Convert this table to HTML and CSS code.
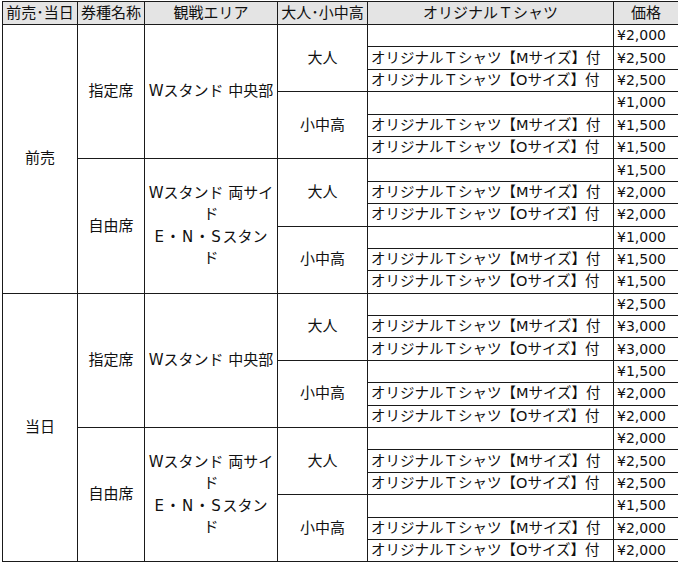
FILE: index.html
```html
<!DOCTYPE html>
<html lang="ja">
<head>
<meta charset="utf-8">
<title>チケット料金表</title>
<link rel="stylesheet" href="styles.css">
</head>
<body>
<table class="price-table">
  <colgroup>
    <col class="c-sale">
    <col class="c-type">
    <col class="c-area">
    <col class="c-age">
    <col class="c-shirt">
    <col class="c-price">
  </colgroup>
  <thead>
    <tr>
      <th>前売･当日</th>
      <th>券種名称</th>
      <th>観戦エリア</th>
      <th>大人･小中高</th>
      <th>オリジナルＴシャツ</th>
      <th>価格</th>
    </tr>
  </thead>
  <tbody>
    <tr>
      <td class="center" rowspan="12">前売</td>
      <td class="center" rowspan="6">指定席</td>
      <td class="center" rowspan="6">Wスタンド 中央部</td>
      <td class="center" rowspan="3">大人</td>
      <td class="shirt"></td>
      <td class="price">¥2,000</td>
    </tr>
    <tr><td class="shirt">オリジナルＴシャツ【Mサイズ】付</td><td class="price">¥2,500</td></tr>
    <tr><td class="shirt">オリジナルＴシャツ【Oサイズ】付</td><td class="price">¥2,500</td></tr>
    <tr>
      <td class="center" rowspan="3">小中高</td>
      <td class="shirt"></td>
      <td class="price">¥1,000</td>
    </tr>
    <tr><td class="shirt">オリジナルＴシャツ【Mサイズ】付</td><td class="price">¥1,500</td></tr>
    <tr><td class="shirt">オリジナルＴシャツ【Oサイズ】付</td><td class="price">¥1,500</td></tr>
    <tr>
      <td class="center" rowspan="6">自由席</td>
      <td class="center multi" rowspan="6">Wスタンド 両サイ<br>ド<br><span class="ens">E<span class="cjk">・</span>N<span class="cjk">・</span>S</span>スタン<br>ド</td>
      <td class="center" rowspan="3">大人</td>
      <td class="shirt"></td>
      <td class="price">¥1,500</td>
    </tr>
    <tr><td class="shirt">オリジナルＴシャツ【Mサイズ】付</td><td class="price">¥2,000</td></tr>
    <tr><td class="shirt">オリジナルＴシャツ【Oサイズ】付</td><td class="price">¥2,000</td></tr>
    <tr>
      <td class="center" rowspan="3">小中高</td>
      <td class="shirt"></td>
      <td class="price">¥1,000</td>
    </tr>
    <tr><td class="shirt">オリジナルＴシャツ【Mサイズ】付</td><td class="price">¥1,500</td></tr>
    <tr><td class="shirt">オリジナルＴシャツ【Oサイズ】付</td><td class="price">¥1,500</td></tr>

    <tr>
      <td class="center" rowspan="12">当日</td>
      <td class="center" rowspan="6">指定席</td>
      <td class="center" rowspan="6">Wスタンド 中央部</td>
      <td class="center" rowspan="3">大人</td>
      <td class="shirt"></td>
      <td class="price">¥2,500</td>
    </tr>
    <tr><td class="shirt">オリジナルＴシャツ【Mサイズ】付</td><td class="price">¥3,000</td></tr>
    <tr><td class="shirt">オリジナルＴシャツ【Oサイズ】付</td><td class="price">¥3,000</td></tr>
    <tr>
      <td class="center" rowspan="3">小中高</td>
      <td class="shirt"></td>
      <td class="price">¥1,500</td>
    </tr>
    <tr><td class="shirt">オリジナルＴシャツ【Mサイズ】付</td><td class="price">¥2,000</td></tr>
    <tr><td class="shirt">オリジナルＴシャツ【Oサイズ】付</td><td class="price">¥2,000</td></tr>
    <tr>
      <td class="center" rowspan="6">自由席</td>
      <td class="center multi" rowspan="6">Wスタンド 両サイ<br>ド<br><span class="ens">E<span class="cjk">・</span>N<span class="cjk">・</span>S</span>スタン<br>ド</td>
      <td class="center" rowspan="3">大人</td>
      <td class="shirt"></td>
      <td class="price">¥2,000</td>
    </tr>
    <tr><td class="shirt">オリジナルＴシャツ【Mサイズ】付</td><td class="price">¥2,500</td></tr>
    <tr><td class="shirt">オリジナルＴシャツ【Oサイズ】付</td><td class="price">¥2,500</td></tr>
    <tr>
      <td class="center" rowspan="3">小中高</td>
      <td class="shirt"></td>
      <td class="price">¥1,500</td>
    </tr>
    <tr><td class="shirt">オリジナルＴシャツ【Mサイズ】付</td><td class="price">¥2,000</td></tr>
    <tr><td class="shirt">オリジナルＴシャツ【Oサイズ】付</td><td class="price">¥2,000</td></tr>
  </tbody>
</table>
</body>
</html>
```
FILE: styles.css
```css
html, body {
  background: #ffffff;
}

body {
  margin: 1px 2px 0 2px;
  font-family: "DejaVu Sans", "Noto Sans CJK JP", sans-serif;
  font-size: 15px;
  color: #111111;
}

.price-table {
  width: 676px;
  table-layout: fixed;
  border-collapse: collapse;
}

.c-sale { width: 75px; }
.c-type { width: 67px; }
.c-area { width: 133px; }
.c-age { width: 90px; }
.c-shirt { width: 246px; }
.c-price { width: 65px; }

.price-table th,
.price-table td {
  border: 1px solid #1a1a1a;
  padding: 0 3px;
  line-height: 21px;
  vertical-align: middle;
  white-space: nowrap;
  overflow: hidden;
}

.price-table thead tr {
  height: 23px;
}

.price-table th {
  background: #e4e4e4;
  font-weight: normal;
  text-align: center;
  padding: 0;
}

.price-table tbody tr {
  height: 22.4px;
}

.center {
  text-align: center;
}

.multi {
  line-height: 23px;
}

.ens {
  letter-spacing: 1.5px;
}

.cjk {
  font-family: "Noto Sans CJK JP", sans-serif;
}

.shirt {
  text-align: left;
  padding-left: 4px;
  font-size: 14.5px;
}

.price {
  text-align: left;
  font-size: 14px;
}
```
